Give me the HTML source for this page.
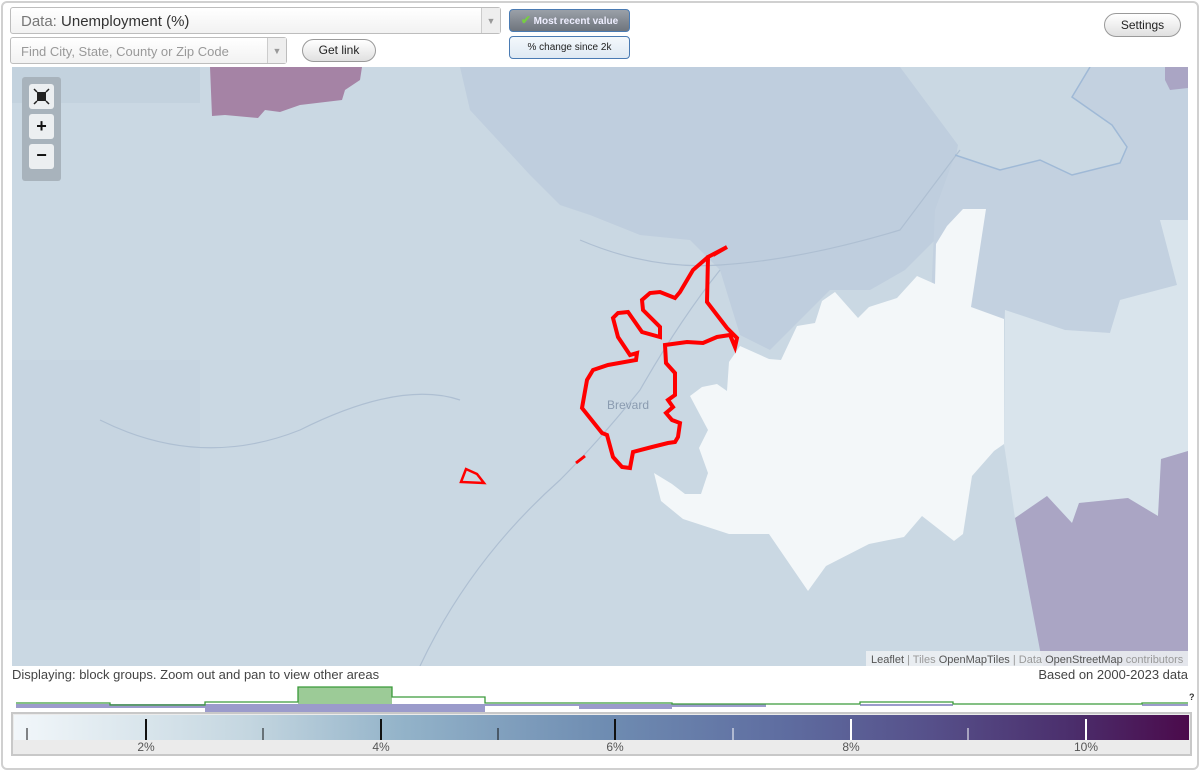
<!DOCTYPE html>
<html><head><meta charset="utf-8"><style>
*{box-sizing:border-box;margin:0;padding:0}
body{width:1200px;height:771px;background:#fff;font-family:"Liberation Sans",sans-serif;position:relative;overflow:hidden}
.frame{position:absolute;left:1px;top:1px;width:1198px;height:769px;border:2px solid #d0d0d0;border-radius:6px}
.sel{position:absolute;background:linear-gradient(#fff,#f2f2f2);border:1px solid #bdbdbd;border-radius:3px}
.arr{position:absolute;right:0;top:0;bottom:0;width:19px;border-left:1px solid #ccc;background:#eee;color:#999;font-size:9px;text-align:center}
.btn{position:absolute;border:1px solid #9a9a9a;border-radius:12px;background:linear-gradient(#fff,#e0e0e0);font-size:12px;text-align:center;color:#222}
.tb{position:absolute;border:1px solid #4a7bb3;border-radius:4px;font-size:10px;text-align:center}
.zb{position:absolute;left:29px;width:25px;height:25px;background:#eceff1;border-radius:3px;text-align:center;font-weight:bold;font-size:18px;color:#111}
</style></head><body>
<div class="frame"></div>
<div class="sel" style="left:10px;top:7px;width:491px;height:27px"><span style="position:absolute;left:10px;top:5px;font-size:15px;color:#777">Data: <span style="color:#333">Unemployment (%)</span></span><div class="arr" style="line-height:26px">▼</div></div>
<div class="sel" style="left:10px;top:37px;width:277px;height:27px"><span style="position:absolute;left:10px;top:6px;font-size:13px;color:#999">Find City, State, County or Zip Code</span><div class="arr" style="line-height:26px">▼</div></div>
<div class="btn" style="left:302px;top:39px;width:74px;height:23px;line-height:21px">Get link</div>
<div class="tb" style="left:509px;top:9px;width:121px;height:23px;line-height:21px;background:linear-gradient(#9aa0a8,#6f757d);color:#eef;font-weight:bold"><span style="color:#7c4;font-size:12px">✔</span> Most recent value</div>
<div class="tb" style="left:509px;top:36px;width:121px;height:23px;line-height:21px;background:linear-gradient(#f4f8fc,#dfe9f3);color:#222">% change since 2k</div>
<div class="btn" style="left:1104px;top:13px;width:77px;height:24px;line-height:22px">Settings</div>

<svg style="position:absolute;left:12px;top:67px" width="1176" height="599" viewBox="12 67 1176 599">
<rect x="12" y="67" width="1176" height="599" fill="#cad8e3"/>
<rect x="12" y="67" width="188" height="36" fill="#c3d2de"/>
<rect x="12" y="360" width="188" height="240" fill="#c7d5e1"/>
<polygon fill="#bfcede" points="460,67 900,67 958,145 950,190 935,240 905,270 870,290 830,290 800,320 770,350 740,335 720,270 690,240 640,235 590,215 560,205 530,175 470,110"/>
<polygon fill="#c3d1e0" points="955,155 1000,170 1040,160 1072,175 1120,163 1127,147 1112,125 1072,97 1090,67 1188,67 1188,220 1160,220 1177,285 1120,300 1110,333 1065,330 1005,310 1004,320 930,320 935,210"/>
<polygon fill="#d9e4ec" points="1005,310 1065,330 1110,333 1120,300 1177,285 1160,220 1188,220 1188,451 1161,459 1158,516 1128,498 1079,503 1072,523 1047,496 1015,518 1004,444"/>
<polygon fill="#aaa5c4" points="1015,518 1047,496 1072,523 1079,503 1128,498 1158,516 1161,459 1188,451 1188,666 1043,666"/>
<polygon fill="#aaa5c4" points="1165,67 1188,67 1188,88 1170,90 1165,80"/>
<polygon fill="#a583a5" points="210,67 362,67 360,80 345,90 342,100 300,105 280,112 265,110 258,118 225,115 212,116"/>
<polygon fill="#f3f7f9" points="986,209 963,209 947,226 936,244 935,284 917,276 897,298 869,307 858,318 835,292 822,301 815,323 797,326 781,360 769,359 740,346 729,362 727,391 717,384 702,387 690,396 708,430 699,448 708,473 701,494 685,494 672,484 654,473 661,501 683,519 729,534 769,534 808,591 826,566 869,544 904,537 922,516 954,541 963,534 972,476 994,451 1004,444 1004,319 971,307"/>
<g fill="none" stroke="#aebfd2" stroke-width="1.2">
<path d="M580,240 Q650,270 720,265 Q800,260 900,230 L960,150"/>
<path d="M420,666 Q470,560 560,480 Q600,440 640,390 Q680,320 720,270"/>
<path d="M100,420 Q200,470 300,430 Q400,380 460,400"/>
<path d="M955,155 L1000,170 L1040,160 L1072,175 L1120,163 L1127,147 L1112,125 L1072,97 L1090,67" stroke="#9fb9d6" stroke-width="1.5"/>
</g>
<path fill="none" stroke="#f00" stroke-width="4" stroke-linejoin="miter" d="M713,255 L727,247 L708,257 L707,302 L727,328 L737,338 L735,347 L730,335 L717,337 L703,343 L687,342 L665,345 L666,363 L675,373 L675,395 L668,400 L673,407 L666,413 L672,420 L680,423 L678,437 L675,442 L668,443 L652,447 L633,452 L630,468 L622,467 L613,457 L607,435 L602,433 L582,408 L587,380 L593,370 L608,365 L636,360 L637,353 L630,355 L618,337 L613,318 L618,313 L628,312 L642,332 L660,337 L660,327 L643,310 L642,300 L650,293 L660,292 L675,298 L680,292 L693,270 L708,257"/>
<path fill="none" stroke="#f00" stroke-width="3" d="M576,463 L585,456"/>
<polygon fill="none" stroke="#f00" stroke-width="2.5" points="461,482 466,469 477,474 484,483"/>
<text x="607" y="409" font-family="Liberation Sans" font-size="12" fill="#8a9bb0">Brevard</text>
<rect x="22" y="77" width="39" height="104" rx="3" fill="#a8b3bc"/>
<rect x="866" y="651" width="322" height="15" fill="#eef1f3" opacity="0.85"/>
<text x="871" y="663" font-family="Liberation Sans" font-size="11" fill="#999"><tspan fill="#555">Leaflet</tspan> | Tiles <tspan fill="#555">OpenMapTiles</tspan> | Data <tspan fill="#555">OpenStreetMap</tspan> contributors</text>
</svg>
<div class="zb" style="top:84px"><svg width="25" height="25"><rect x="8" y="8" width="9" height="9" fill="#222"/><path d="M5 5l3 3M20 5l-3 3M5 20l3-3M20 20l-3-3" stroke="#222" stroke-width="1.5"/></svg></div>
<div class="zb" style="top:114px;line-height:25px">+</div>
<div class="zb" style="top:144px;line-height:23px">−</div>

<div style="position:absolute;left:12px;top:667px;font-size:13px;color:#444">Displaying: block groups. Zoom out and pan to view other areas</div>
<div style="position:absolute;right:12px;top:667px;font-size:13px;color:#444">Based on 2000-2023 data</div>

<svg style="position:absolute;left:0;top:683px" width="1200" height="30">
<g fill="#9b9bcb">
<rect x="16" y="21" width="94" height="4"/><rect x="110" y="21" width="95" height="4"/>
<rect x="205" y="21" width="187" height="11"/><rect x="392" y="21" width="93" height="8"/>
<rect x="485" y="21" width="94" height="2"/><rect x="579" y="21" width="93" height="5"/>
<rect x="672" y="21" width="94" height="3"/><rect x="860" y="21" width="93" height="2"/><rect x="1142" y="21" width="46" height="2"/>
</g>
<rect x="298" y="4" width="94" height="17" fill="#9ccb97"/>
<polyline fill="none" stroke="#3a9a3a" stroke-width="1.3" points="16,20 110,20 110,22 205,22 205,19 298,19 298,4 392,4 392,14 485,14 485,20 672,20 672,21 860,21 860,19 953,19 953,21 1142,21 1142,20 1188,20"/>
<text x="1189" y="17" font-size="9" font-family="Liberation Sans" font-weight="bold" fill="#333">?</text>
</svg>

<div style="position:absolute;left:11px;top:712px;width:1181px;height:44px;border:2px solid #c8c8c8;background:#ebebeb"></div>
<div style="position:absolute;left:14px;top:715px;width:1175px;height:25px;background:linear-gradient(90deg,#f2f7fa 0%,#c4d6e0 20%,#93b3c9 33%,#6f8db2 50%,#5f6ea1 65%,#56508a 78%,#4b2e6c 90%,#4b0a4b 100%)"></div>
<svg style="position:absolute;left:0;top:715px" width="1200" height="40">
<g stroke="#111" stroke-width="2"><line x1="146" y1="4" x2="146" y2="25"/><line x1="381" y1="4" x2="381" y2="25"/><line x1="615" y1="4" x2="615" y2="25"/></g>
<g stroke="#fff" stroke-width="2"><line x1="851" y1="4" x2="851" y2="25"/><line x1="1086" y1="4" x2="1086" y2="25"/></g>
<g stroke="#111" stroke-width="1"><line x1="27" y1="13" x2="27" y2="25"/><line x1="263" y1="13" x2="263" y2="25"/><line x1="498" y1="13" x2="498" y2="25"/></g>
<g stroke="#fff" stroke-width="1"><line x1="733" y1="13" x2="733" y2="25"/><line x1="968" y1="13" x2="968" y2="25"/></g>
<g font-family="Liberation Sans" font-size="12" fill="#555" text-anchor="middle"><text x="146" y="36">2%</text><text x="381" y="36">4%</text><text x="615" y="36">6%</text><text x="851" y="36">8%</text><text x="1086" y="36">10%</text></g>
</svg>
</body></html>
